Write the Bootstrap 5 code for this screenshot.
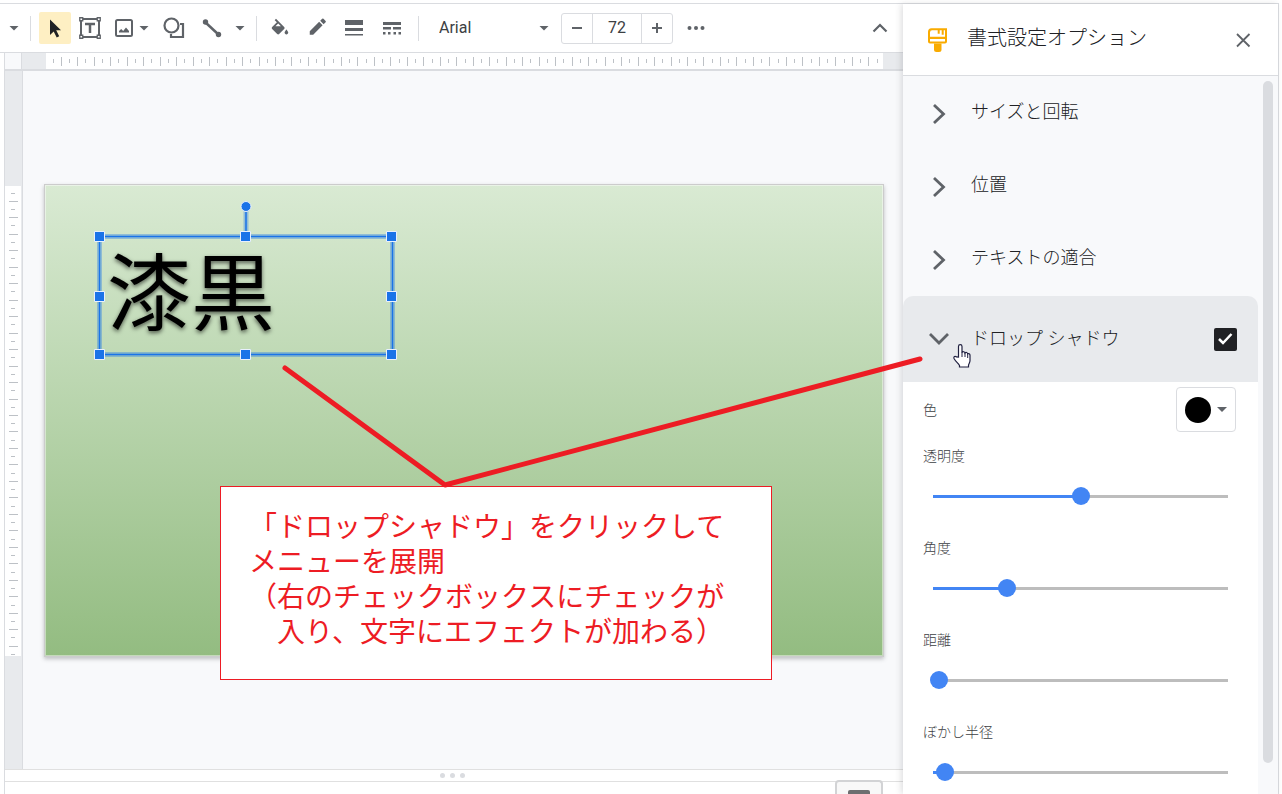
<!DOCTYPE html>
<html lang="ja">
<head>
<meta charset="utf-8">
<meta name="viewport" content="width=device-width, initial-scale=1">
<title>書式設定オプション</title>
<link rel="stylesheet" href="https://cdn.jsdelivr.net/npm/bootstrap@5.3.0/dist/css/bootstrap.min.css">
<style>
:root{--line:#dadce0;--ink:#5f6368;--soft:#f8f9fb;--gray:#e8eaed;--blue:#1a73e8;--red:#ed1c24}
body{font-family:Roboto,"Noto Sans CJK JP",sans-serif;color:#202124;background:#fff;overflow:hidden}
.app{height:100vh;padding:3px 3px 0 0}
.frame{border-top:1px solid var(--line);border-right:1px solid var(--line);min-height:0}
button{color:var(--ink)}
svg{display:block;flex:none}
/* toolbar */
.toolbar{height:49px;padding:0 8px 0 9px;border-bottom:1px solid var(--line)}
.tool{width:30px;height:32px;padding:0;border:0;background:none;display:flex;align-items:center;justify-content:center}
.tool.picked{width:32px;background:#feefc3;border-radius:2px}
.drop{width:10px;height:32px;padding:0;border:0;background:none}
.tri{display:block;width:10px;height:5px;background:var(--ink);clip-path:polygon(0 0,100% 0,50% 100%)}
.sep{width:1px;height:25px;background:var(--line);margin:0 8px 0 11px}
.gap-s{margin-left:6px}
.gap-l{margin-left:10px}
.font-box{width:112px;margin-left:12px}
.font-box select{appearance:none;border:0;background:none;color:#3c4043;font-size:16px;width:100%;padding:0}
.font-box .tri{margin-left:-12px;pointer-events:none;flex:none}
.size-box{height:31px;width:112px;border:1px solid var(--line);border-radius:3px}
.size-box button{width:30px;border:0;background:none;padding:0;display:flex;align-items:center;justify-content:center}
.size-box input{min-width:0;flex:1;border:0;border-left:1px solid var(--line);border-right:1px solid var(--line);text-align:center;color:#3c4043;font-size:16px;padding:0}
/* work area */
.work{margin-left:4px;border-left:1px solid var(--line);min-height:0}
.ruler-x{height:18px;border-bottom:2px solid var(--line)}
.ruler-x .corner{width:17px;background:var(--soft);border-right:1px solid var(--line)}
.ruler-x .off-l{width:24px;background:var(--gray)}
.ruler-x .off-r{width:20px;background:var(--gray)}
.ruler-y{width:18px;background:var(--gray);border-right:1px solid var(--line);padding-top:2px}
.ruler-y svg{background:#fff;width:16px;height:470px}
.ruler-x svg{width:0}
.stage{background:var(--soft);min-width:0;padding:0 19px 0 21px}
.slide{width:100%;aspect-ratio:840/473;border:1px solid #ccc;background:linear-gradient(#d9ead3,#93bc81);box-shadow:inset 0 0 0 1px rgba(255,255,255,.45),0 2px 4px rgba(60,64,67,.3)}
.text-shape{left:54px;top:55px;width:294px;height:120px;padding-left:8px;font-size:84px;line-height:112px;color:#000;text-shadow:0 2px 4px rgba(0,0,0,.6);white-space:nowrap}
.handles{left:44px;top:9px}
.grip{height:13px;border-top:1px solid #e0e0e0;border-bottom:1px solid #e0e0e0;padding-right:3px}
.grip i{width:5px;height:5px;border-radius:50%;background:var(--line)}
.grip{gap:5px}
.notes{height:12px}
.explore{right:20px;bottom:0;width:48px;height:14px;border:2px solid #d2d3d5;border-bottom:0;border-radius:4px 4px 0 0;background:#f8f8f8;padding:8px 0 0}
.explore i{display:block;width:22px;height:4px;margin:auto;border-radius:2px 2px 0 0;background:#6d6e70}
/* side panel */
.side{width:375px;background:var(--soft);box-shadow:-2px 0 6px rgba(60,64,67,.16);z-index:1}
.side-head{height:72px;flex:none;background:#fff;border-bottom:1px solid var(--line);padding:0 23px 4px 24px}
.side-head h1{font-size:20px;font-weight:300;line-height:28px;margin:0 0 0 19px}
.side-head button{border:0;background:none;padding:4px 4px 0}
.side-list{width:355px;padding-top:1px}
.fold{height:73px;width:100%;border:0;background:none;padding:0 0 0 24px;font-size:18px;font-weight:300;color:#202124;text-align:left}
.fold span{margin:0 0 4px 20px}
.open-head{height:86px;background:var(--gray);border-radius:10px 10px 0 0;padding-right:21px}
.open-head .fold{height:86px}
.open-head .fold span{margin-bottom:2px}
.tick{appearance:none;width:23px;height:23px;border-radius:2px;background:#202124;margin:0;grid-area:1/1}
.tick-box{display:grid;place-items:center;flex:none}
.tick-box svg{grid-area:1/1;pointer-events:none}
.open-body{background:#fff;padding:5px 22px 0 20px;font-size:14px;font-weight:300;color:#3c4043;height:420px}
.open-body label{padding-top:2px}
.swatch{width:60px;height:45px;border:1px solid var(--line);border-radius:4px;background:#fff}
.swatch i{width:26px;height:26px;border-radius:50%;background:#000}
.field{height:92px;padding-top:12px}
.field label{display:block;line-height:20px}
.slider{appearance:none;display:block;width:313px;height:18px;margin:21px 0 0 1px;background:linear-gradient(#4285f4,#4285f4) 9px 50%/calc((100% - 18px)*var(--v)) 3px no-repeat,linear-gradient(#bdbdbd,#bdbdbd) 9px 50%/calc(100% - 18px) 3px no-repeat}
.slider::-webkit-slider-thumb{appearance:none;width:18px;height:18px;border-radius:50%;background:#4285f4}
.slider::-moz-range-thumb{width:18px;height:18px;border:0;border-radius:50%;background:#4285f4}
.scroll-bar{width:10px;height:682px;border-radius:5px;background:var(--line);margin:5px 0 0 5px}
/* annotation over the editor */
.lead-lines{left:0;top:0;z-index:3;pointer-events:none}
.callout{left:220px;top:486px;width:552px;height:194px;z-index:2;border:1px solid var(--red);background:#fff;color:var(--red);font:28px/35px "Noto Sans CJK JP",sans-serif;padding:21px 0 0 28px;white-space:nowrap}
</style>
</head>
<body>
<div class="app d-flex flex-column position-relative overflow-hidden">
<div class="frame d-flex flex-grow-1">
  <main class="d-flex flex-column flex-grow-1 position-relative" style="min-width:0">
    <div class="toolbar d-flex align-items-center" role="toolbar">
      <button class="drop" aria-label="ズーム"><span class="tri"></span></button>
      <span class="sep"></span>
      <button class="tool picked" aria-label="選択"><svg width="32" height="32"><path d="M11 7.500V23l3.700-3.600 3 6 2.500-1.200-3-6H22z" fill="#202124"/></svg></button>
      <button class="tool ms-1" aria-label="テキスト ボックス"><svg width="22" height="22" fill="none" stroke="currentColor"><path d="M2 2h18v18H2z" stroke-width="2"/><path d="M6 7h10M11 7v9" stroke-width="2.500"/><path d="M.75 .75h3v3h-3zM18.250 .75h3v3h-3zM.75 18.250h3v3h-3zM18.250 18.250h3v3h-3z" fill="#fff" stroke-width="1.300"/></svg></button>
      <button class="tool ms-1" aria-label="画像"><svg width="18" height="18"><rect x="1" y="1" width="16" height="16" rx="1.500" fill="none" stroke="currentColor" stroke-width="2"/><path d="M4 13.500V12l2.200-2 2 2L11 8.500l3 3.500v1.500z" fill="currentColor"/></svg></button>
      <button class="drop" aria-label="画像メニュー"><span class="tri"></span></button>
      <button class="tool gap-l" aria-label="図形"><svg width="22" height="22" fill="none" stroke="currentColor" stroke-width="2.200"><circle cx="8.500" cy="8.500" r="7"/><path d="M17 7h3v13H8v-3"/></svg></button>
      <button class="tool ms-2" aria-label="線"><svg width="20" height="20"><path d="m3 4 14 13" stroke="currentColor" stroke-width="2.500"/><circle cx="3.500" cy="4" r="2.700" fill="currentColor"/><circle cx="16.500" cy="16.500" r="2.700" fill="currentColor"/></svg></button>
      <button class="drop ms-2" aria-label="線メニュー"><span class="tri"></span></button>
      <span class="sep"></span>
      <button class="tool" aria-label="塗りつぶし"><svg width="22" height="22" viewBox="0 0 24 24" fill="currentColor"><path d="M16.560 8.940 7.620 0 6.210 1.410l2.380 2.380-5.150 5.150c-.59.59-.59 1.540 0 2.120l5.500 5.500c.29.29.68.44 1.060.44s.77-.15 1.060-.44l5.500-5.500c.59-.58.59-1.530 0-2.120zM7 8.200 10 5.210 13 8.200zM19 11.500s-2 2.170-2 3.500c0 1.100.9 2 2 2s2-.9 2-2c0-1.330-2-3.500-2-3.500z" transform="translate(0 2)"/></svg></button>
      <button class="tool ms-2" aria-label="枠線の色"><svg width="22" height="22" viewBox="0 0 24 24" fill="currentColor"><path d="M3 15.500V19.250h3.750L17 9l-3.750-3.750zM20.300 5.700a1 1 0 0 0 0-1.400l-2.300-2.300a1 1 0 0 0-1.400 0L14.400 4.200l3.700 3.700z"/></svg></button>
      <button class="tool gap-s" aria-label="枠線の太さ"><svg width="18" height="16" fill="currentColor"><path d="M0 0h18v5H0zM0 8h18v3H0zM0 14h18v1.500H0z"/></svg></button>
      <button class="tool ms-2" aria-label="枠線の種類"><svg width="18" height="14" fill="currentColor"><path d="M0 1h18v3H0zM0 6h8v2.500H0zM10 6h8v2.500h-8zM0 11h2.500v2.500H0zM5 11h2.500v2.500H5zM10.500 11H13v2.500h-2.500zM15.500 11H18v2.500h-2.500z"/></svg></button>
      <span class="sep"></span>
      <div class="font-box d-flex align-items-center">
        <select aria-label="フォント"><option>Arial</option></select><span class="tri"></span>
      </div>
      <div class="size-box d-flex gap-l">
        <button aria-label="フォントサイズを縮小"><svg width="10" height="10"><path d="M0 5h10" stroke="currentColor" stroke-width="2"/></svg></button>
        <input type="text" value="72" aria-label="フォントサイズ">
        <button aria-label="フォントサイズを拡大"><svg width="10" height="10"><path d="M0 5h10M5 0v10" stroke="currentColor" stroke-width="2"/></svg></button>
      </div>
      <button class="tool ms-2" aria-label="その他"><svg width="18" height="4" fill="currentColor"><circle cx="2.500" cy="2" r="2"/><circle cx="9" cy="2" r="2"/><circle cx="15.500" cy="2" r="2"/></svg></button>
      <button class="tool ms-auto" aria-label="メニューを非表示"><svg width="16" height="10"><path d="m1.500 8.500 6.500-6.500 6.500 6.500" fill="none" stroke="currentColor" stroke-width="2.200"/></svg></button>
    </div>

    <div class="work d-flex flex-column flex-grow-1">
      <div class="ruler-x d-flex">
        <div class="corner"></div><div class="off-l"></div>
        <svg class="flex-grow-1" height="16" id="rx"></svg>
        <div class="off-r"></div>
      </div>
      <div class="d-flex flex-grow-1" style="min-height:0">
        <div class="ruler-y d-flex align-items-center"><svg id="ry"></svg></div>
        <div class="stage d-flex align-items-center flex-grow-1">
          <div class="slide position-relative">
            <div class="text-shape position-absolute" lang="ja">漆黒</div>
            <svg class="handles position-absolute" width="310" height="170">
              <path d="M10.500 42.500h293v118h-293zM157 14v28" fill="none" stroke="#1a73e8" stroke-opacity=".35" stroke-width="5"/>
              <path d="M10.500 42.500h293v118h-293zM157 14v28" fill="none" stroke="#1a73e8" stroke-width="1.500"/>
              <g fill="#1a73e8" stroke="#e8f0fe" stroke-width="1"><circle cx="157" cy="12.500" r="5"/><path id="h" d="M5.500 37.500h10v10h-10z"/><use href="#h" x="146"/><use href="#h" x="292"/><use href="#h" y="60"/><use href="#h" x="292" y="60"/><use href="#h" y="118"/><use href="#h" x="146" y="118"/><use href="#h" x="292" y="118"/></g>
            </svg>
          </div>
        </div>
      </div>
      <div class="grip d-flex justify-content-center align-items-center"><i></i><i></i><i></i></div>
      <div class="notes"></div>
    </div>
    <button class="explore position-absolute" aria-label="データ探索"><i></i></button>
  </main>

  <aside class="side d-flex flex-column flex-shrink-0 position-relative">
    <div class="side-head d-flex align-items-center">
      <svg width="21" height="26" style="margin-top:4px"><path d="M4.500 1.200H20V14.500a2 2 0 0 1-2 2H3a2 2 0 0 1-2-2V5a3.800 3.800 0 0 1 3.500-3.800z" fill="#f9ab00"/><path d="M3 9.700V5.500A2.300 2.300 0 0 1 5.200 3.200h5.500v3.500h2V3.200h2v4.500h2V3.200H18v6.500zM3 12h15v2.400H3z" fill="#fff"/><path d="M7 16.500h7.500v6a2.500 2.500 0 0 1-2.500 2.500H9.500A2.500 2.500 0 0 1 7 22.500z" fill="#f9ab00"/></svg>
      <h1>書式設定オプション</h1>
      <button class="ms-auto" aria-label="閉じる"><svg width="16" height="16"><path d="m2 2 12.500 12.500M14.500 2 2 14.500" stroke="currentColor" stroke-width="1.800"/></svg></button>
    </div>
    <div class="d-flex">
      <div class="side-list">
        <button class="fold d-flex align-items-center"><svg width="24" height="24"><path d="m7 3 9.500 9L7 21" fill="none" stroke="#5f6368" stroke-width="2.800"/></svg><span>サイズと回転</span></button>
        <button class="fold d-flex align-items-center"><svg width="24" height="24"><path d="m7 3 9.500 9L7 21" fill="none" stroke="#5f6368" stroke-width="2.800"/></svg><span>位置</span></button>
        <button class="fold d-flex align-items-center"><svg width="24" height="24"><path d="m7 3 9.500 9L7 21" fill="none" stroke="#5f6368" stroke-width="2.800"/></svg><span>テキストの適合</span></button>
        <div class="open-head d-flex align-items-center">
          <button class="fold d-flex align-items-center" aria-expanded="true"><svg width="24" height="24"><path d="m3 7 9 9 9-9" fill="none" stroke="#5f6368" stroke-width="2.800"/></svg><span>ドロップ シャドウ</span></button>
          <div class="tick-box"><input class="tick" type="checkbox" checked aria-label="ドロップ シャドウ"><svg width="17" height="14"><path d="m2 7 4 4 8.500-9" fill="none" stroke="#fff" stroke-width="2.500"/></svg></div>
        </div>
        <div class="open-body">
          <div class="d-flex justify-content-between align-items-center">
            <label for="color">色</label>
            <button class="swatch d-flex align-items-center m-0 p-0 ps-2" id="color"><i></i><span class="tri gap-s"></span></button>
          </div>
          <div class="field"><label for="s1">透明度</label><input class="slider" id="s1" type="range" value="50" style="--v:.5"></div>
          <div class="field"><label for="s2">角度</label><input class="slider" id="s2" type="range" value="25" style="--v:.25"></div>
          <div class="field"><label for="s3">距離</label><input class="slider" id="s3" type="range" value="2" style="--v:.02"></div>
          <div class="field"><label for="s4">ぼかし半径</label><input class="slider" id="s4" type="range" value="4" style="--v:.04"></div>
        </div>
      </div>
      <div class="scroll-bar"></div>
    </div>
  </aside>
</div>

<svg class="lead-lines position-absolute" width="1000" height="500">
  <path d="m285 368 160 117 475-126" fill="none" stroke="#ed1c24" stroke-width="5" stroke-linecap="round" stroke-linejoin="round"/>
  <path d="M958.500 357v-10.500c0-2.400 3.500-2.400 3.500 0v6c.5-1.200 2.700-1 3 .5.800-1 2.500-.6 2.700.8 1-.6 2.300 0 2.300 1.500v5.500c0 2-1.500 3.200-1.500 4.700V367h-9v-1.500c-1.500-2.500-3.500-3.500-5.500-7-.7-2 1.200-2.800 2.300-1.700z" fill="#fff" stroke="#202040" stroke-width="1.200"/>
  <path d="M962 352v5M965 353v4M967.700 354v4" stroke="#202040" fill="none"/>
</svg>
<div class="callout position-absolute">「ドロップシャドウ」をクリックして<br>メニューを展開<br>（右のチェックボックスにチェックが<br>　入り、文字にエフェクトが加わる）</div>
</div>
<script src="https://cdn.jsdelivr.net/npm/bootstrap@5.3.0/dist/js/bootstrap.bundle.min.js"></script>
<script>
// ruler ticks: a long one every 16.48px, a short one halfway between
function ticks(id, length, vertical) {
  let d = '';
  for (let i = 0; 7 + i * 8.24 < length; i++) {
    const p = Math.floor(7 + i * 8.24) + .5, a = i % 2 ? 4 : 6, n = i % 2 ? 9 : 4;
    d += vertical ? `M${a} ${p}h${n}` : `M${p} ${a}v${n}`;
  }
  document.getElementById(id).innerHTML = `<path d="${d}" stroke="#bdc1c6"/>`;
}
const rx = document.getElementById('rx');
const draw = () => ticks('rx', rx.getBoundingClientRect().width, false);
draw();
window.addEventListener('resize', draw);
ticks('ry', 470, true);
</script>
</body>
</html>
